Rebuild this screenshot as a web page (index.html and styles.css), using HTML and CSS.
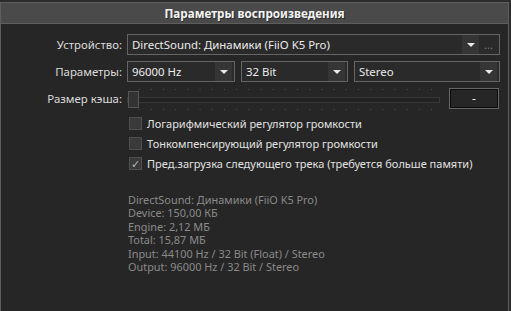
FILE: index.html
```html
<!DOCTYPE html>
<html lang="ru">

<head>
    <meta charset="UTF-8">
    <meta name="viewport" content="width=device-width, initial-scale=1.0">
    <title>Параметры воспроизведения</title>
    <link rel="stylesheet" href="styles.css">
</head>

<body>
    <div class="frame">
        <div class="header">Параметры воспроизведения</div>
        <div class="content">
            <div class="form">
                <label class="lbl">Устройство:</label>
                <div class="combo combo-device">
                    <span class="value">DirectSound: Динамики (FiiO K5 Pro)</span>
                    <span class="arrow"></span>
                    <span class="more">...</span>
                </div>

                <label class="lbl">Параметры:</label>
                <div class="params">
                    <div class="combo combo-rate">
                        <span class="value">96000 Hz</span>
                        <span class="arrow"></span>
                    </div>
                    <div class="combo combo-bits">
                        <span class="value">32 Bit</span>
                        <span class="arrow"></span>
                    </div>
                    <div class="combo combo-ch">
                        <span class="value">Stereo</span>
                        <span class="arrow"></span>
                    </div>
                </div>

                <label class="lbl">Размер кэша:</label>
                <div class="cache">
                    <div class="slider">
                        <div class="ticks top"></div>
                        <div class="track"></div>
                        <div class="thumb"></div>
                        <div class="ticks bottom"></div>
                    </div>
                    <button class="btn">-</button>
                </div>
            </div>

            <div class="checks">
                <div class="check"><span class="box"></span>Логарифмический регулятор громкости</div>
                <div class="check"><span class="box"></span>Тонкомпенсирующий регулятор громкости</div>
                <div class="check"><span class="box checked">&#10003;</span>Пред.загрузка следующего трека (требуется больше памяти)</div>
            </div>

            <div class="info">
                <div>DirectSound: Динамики (FiiO K5 Pro)</div>
                <div>Device: 150,00 КБ</div>
                <div>Engine: 2,12 МБ</div>
                <div>Total: 15,87 МБ</div>
                <div>Input: 44100 Hz / 32 Bit (Float) / Stereo</div>
                <div>Output: 96000 Hz / 32 Bit / Stereo</div>
            </div>
        </div>
    </div>
</body>

</html>
```

FILE: styles.css
```css
* {
    margin: 0;
    padding: 0;
    box-sizing: border-box;
}

body {
    background-color: #2c2c2c;
    font-family: "Noto Sans", "Open Sans", sans-serif;
    font-size: 11.4px;
    color: #dcdcdc;
    overflow: hidden;
    height: 311px;
}

.frame {
    margin-top: 2px;
    width: 509px;
    height: 309px;
    border: 1px solid #5e5e5e;
    border-bottom: 0;
    background-color: #262626;
}

.header {
    height: 21px;
    background-color: #4a4a4a;
    border-bottom: 1px solid #5e5e5e;
    text-align: center;
    font-weight: bold;
    font-size: 11.7px;
    color: #f4f4f4;
    line-height: 20px;
    text-shadow: 1px 1px 0 #2a2a2a;
}

.content {
    padding: 10px 8px 0 0;
}

.form {
    display: grid;
    grid-template-columns: 121px 1fr;
    column-gap: 5px;
    row-gap: 6px;
}

.lbl {
    text-align: right;
    line-height: 21px;
}

.combo {
    height: 21px;
    border: 1px solid #656565;
    background-color: #2a2a2a;
    display: flex;
    align-items: center;
    padding: 0 1px 0 4px;
    color: #ececec;
}

.combo .value {
    flex: 1;
    white-space: nowrap;
    overflow: hidden;
}

.arrow {
    width: 17px;
    height: 19px;
    background-color: #353535;
    display: flex;
    align-items: center;
    justify-content: center;
}

.arrow::after {
    content: "";
    border-left: 4px solid transparent;
    border-right: 4px solid transparent;
    border-top: 4px solid #e8e8e8;
}

.combo-rate .arrow,
.combo-bits .arrow,
.combo-ch .arrow {
    margin-right: 1px;
}

.more {
    width: 19px;
    text-align: center;
    color: #7a7a7a;
    font-size: 11px;
    line-height: 19px;
}

.params {
    display: flex;
    gap: 6px;
}

.combo-rate {
    width: 108px;
}

.combo-bits {
    width: 107px;
}

.combo-ch {
    flex: 1;
}

.cache {
    display: flex;
    align-items: center;
    gap: 9px;
}

.slider {
    position: relative;
    width: 313px;
    height: 21px;
}

.ticks {
    position: absolute;
    left: 6px;
    right: 2px;
    height: 1px;
    background-image: radial-gradient(circle, #4e4e4e 0.6px, transparent 0.7px);
    background-size: 12.2px 1px;
    background-repeat: repeat-x;
}

.ticks.top {
    top: 1px;
}

.ticks.bottom {
    bottom: -1px;
}

.track {
    position: absolute;
    left: 0;
    right: 0;
    top: 9px;
    height: 6px;
    border: 1px solid #383838;
    background-color: #222;
}

.thumb {
    position: absolute;
    left: 1px;
    top: 3px;
    width: 11px;
    height: 17px;
    border: 1px solid #555;
    background-color: #333;
}

.btn {
    width: 50px;
    height: 21px;
    border: 1px solid #666;
    outline: 1px solid #0c0c0c;
    outline-offset: -2px;
    background-color: #262626;
    color: #eee;
    font-family: inherit;
    font-size: 12px;
}

.checks {
    margin: 4px 0 0 127px;
    font-size: 11px;
}

.check {
    height: 20px;
    display: flex;
    align-items: center;
    white-space: nowrap;
    color: #e2e2e2;
}

.box {
    width: 13px;
    height: 13px;
    border: 1px solid #4e4e4e;
    background-color: #3a3a3a;
    margin: 0 5px 0 1px;
    display: flex;
    align-items: center;
    justify-content: center;
    font-size: 11px;
    color: #b8b8b8;
}

.info {
    margin: 20px 0 0 127px;
    font-size: 10.9px;
    color: #8a8a8a;
    line-height: 13.4px;
}
```
